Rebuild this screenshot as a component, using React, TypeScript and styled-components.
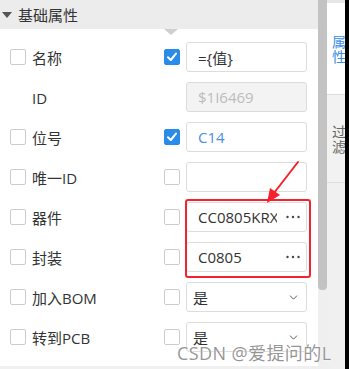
import React from "react";
import styled, { createGlobalStyle } from "styled-components";
import { ChevronDown } from "lucide-react";

const Global = createGlobalStyle`
  html, body { margin: 0; padding: 0; background: #000; }
  body { font-family: "Open Sans", "Noto Sans CJK SC", sans-serif; }
`;

const Screen = styled.div`
  position: relative;
  width: 349px;
  height: 369px;
  display: flex;
  background: #000;
  overflow: hidden;
`;

const Main = styled.div`
  width: 318px;
  height: 369px;
  display: flex;
  flex-direction: column;
  background: #f0f0f0;
`;

const Sheet = styled.div`
  height: 366px;
  background: #fff;
  display: flex;
  flex-direction: column;
`;

const Header = styled.div`
  position: relative;
  height: 29px;
  background: #ececec;
  display: flex;
  align-items: center;
  padding-left: 2px;
  gap: 6px;
  font-family: "Noto Sans CJK SC", sans-serif;
  font-size: 15px;
  color: #333;
  flex-shrink: 0;
`;

const Caret = styled.span`
  width: 0;
  height: 0;
  border-left: 5px solid transparent;
  border-right: 5px solid transparent;
  border-top: 6px solid #555;
  margin-top: 1px;
`;

const Pointer = styled.span`
  position: absolute;
  left: 164px;
  top: 29px;
  width: 0;
  height: 0;
  border-left: 7px solid transparent;
  border-right: 7px solid transparent;
  border-top: 6px solid #cfcfcf;
`;

const List = styled.div`
  padding-top: 8px;
  display: flex;
  flex-direction: column;
`;

const Row = styled.div`
  height: 40px;
  display: flex;
  align-items: center;
  padding-left: 10px;
`;

const Box = styled.span<{ $checked?: boolean; $hidden?: boolean }>`
  width: 16px;
  height: 16px;
  box-sizing: border-box;
  border-radius: 2px;
  flex-shrink: 0;
  visibility: ${(p) => (p.$hidden ? "hidden" : "visible")};
  border: 1px solid ${(p) => (p.$checked ? "#2a8cea" : "#cccccc")};
  background: ${(p) => (p.$checked ? "#2a8cea" : "#fff")};
  display: flex;
  align-items: center;
  justify-content: center;
`;

const Label = styled.span`
  flex: 1;
  margin-left: 6px;
  font-size: 15px;
  color: #333;
  font-family: "Noto Sans CJK SC", sans-serif;
  white-space: nowrap;
`;

const LatinPart = styled.span`
  font-family: "Open Sans", sans-serif;
`;

type Variant = "text" | "disabled" | "more" | "select";

const Field = styled.div<{ $variant: Variant; $tone?: "blue" | "dark" }>`
  width: 121px;
  height: 30px;
  margin-left: 6px;
  margin-right: 11px;
  box-sizing: border-box;
  border: 1px solid #dcdcdc;
  border-radius: 3px;
  display: flex;
  align-items: center;
  padding-left: ${(p) => (p.$variant === "select" ? "6px" : "11px")};
  padding-right: 6px;
  background: ${(p) => (p.$variant === "disabled" ? "#f3f3f3" : "#fff")};
  color: ${(p) =>
    p.$variant === "disabled" ? "#bcbcbc" : p.$tone === "blue" ? "#4a8fe0" : "#333"};
  font-size: 15px;
  font-family: "Open Sans", "Noto Sans CJK SC", sans-serif;
  gap: 9px;
`;

const Value = styled.span`
  flex: 1;
  overflow: hidden;
  white-space: nowrap;
  text-overflow: clip;
`;

const Scroll = styled.div`
  width: 9px;
  height: 369px;
  background: #efefef;
  display: flex;
  flex-direction: column;
`;

const Thumb = styled.div`
  width: 9px;
  height: 290px;
  background: #c3c3c3;
  border-radius: 0 0 4px 4px;
`;

const Side = styled.div`
  width: 18px;
  height: 369px;
  background: #f0f0f0;
  display: flex;
  flex-direction: column;
  overflow: hidden;
`;

const SideTop = styled.div`
  height: 3px;
  background: #e6e6e6;
`;

const Tab = styled.div<{ $active?: boolean; $h: number }>`
  height: ${(p) => p.$h}px;
  box-sizing: border-box;
  border-bottom: 1px solid #dddddd;
  background: ${(p) => (p.$active ? "#fff" : "#f2f2f2")};
  color: ${(p) => (p.$active ? "#3a8ee6" : "#666")};
  display: flex;
  align-items: center;
  padding-left: 5px;
  font-family: "Noto Sans CJK SC", sans-serif;
  font-size: 14px;
  line-height: 15px;
`;

const TabText = styled.span`
  width: 14px;
  word-break: break-all;
  white-space: normal;
`;

const Highlight = styled.div`
  position: absolute;
  left: 185px;
  top: 199px;
  width: 126px;
  height: 79px;
  box-sizing: border-box;
  border: 2px solid #f5222d;
  border-radius: 3px;
  pointer-events: none;
`;

const Arrow = styled.svg`
  position: absolute;
  left: 260px;
  top: 155px;
  pointer-events: none;
`;

const Watermark = styled.div`
  position: absolute;
  left: 177px;
  top: 339px;
  font-size: 18px;
  font-family: "Open Sans", "Noto Sans CJK SC", sans-serif;
  color: rgba(130, 130, 130, 0.85);
  text-shadow: 0 0 1px #fff, 0 0 2px #fff;
  white-space: nowrap;
  letter-spacing: 0.4px;
  pointer-events: none;
`;

const Check = () => (
  <svg width="12" height="12" viewBox="0 0 12 12">
    <path d="M2 6.3 L4.8 9 L10 2.6" fill="none" stroke="#fff" strokeWidth="2" strokeLinecap="round" strokeLinejoin="round" />
  </svg>
);

const MoreDots = () => (
  <svg width="14" height="4" viewBox="0 0 14 4">
    <circle cx="1.5" cy="2" r="1.2" fill="#444" />
    <circle cx="7" cy="2" r="1.2" fill="#444" />
    <circle cx="12.5" cy="2" r="1.2" fill="#444" />
  </svg>
);

type RowData = {
  label: React.ReactNode;
  left?: boolean;
  right?: "checked" | "empty" | "none";
  variant: Variant;
  value: string;
  tone?: "blue" | "dark";
};

const rows: RowData[] = [
  { label: "名称", left: true, right: "checked", variant: "text", value: "={值}" },
  { label: <LatinPart>ID</LatinPart>, left: false, right: "none", variant: "disabled", value: "$1I6469" },
  { label: "位号", left: true, right: "checked", variant: "text", value: "C14", tone: "blue" },
  { label: <>唯一<LatinPart>ID</LatinPart></>, left: true, right: "empty", variant: "text", value: "" },
  { label: "器件", left: true, right: "empty", variant: "more", value: "CC0805KRX7R9BB104" },
  { label: "封装", left: true, right: "empty", variant: "more", value: "C0805" },
  { label: <>加入<LatinPart>BOM</LatinPart></>, left: true, right: "empty", variant: "select", value: "是" },
  { label: <>转到<LatinPart>PCB</LatinPart></>, left: true, right: "empty", variant: "select", value: "是" },
];

export default function App() {
  return (
    <>
      <Global />
      <Screen>
        <Main>
          <Sheet>
            <Header>
              <Caret />
              <span>基础属性</span>
              <Pointer />
            </Header>
            <List>
              {rows.map((r, i) => (
                <Row key={i}>
                  <Box $hidden={!r.left} />
                  <Label>{r.label}</Label>
                  <Box $hidden={r.right === "none"} $checked={r.right === "checked"}>
                    {r.right === "checked" && <Check />}
                  </Box>
                  <Field $variant={r.variant} $tone={r.tone}>
                    <Value>{r.value}</Value>
                    {r.variant === "more" && <MoreDots />}
                    {r.variant === "select" && <ChevronDown size={13} color="#555" strokeWidth={1.8} />}
                  </Field>
                </Row>
              ))}
            </List>
          </Sheet>
        </Main>
        <Scroll>
          <Thumb />
        </Scroll>
        <Side>
          <SideTop />
          <Tab $active $h={92}>
            <TabText>属性</TabText>
          </Tab>
          <Tab $h={88}>
            <TabText>过滤</TabText>
          </Tab>
        </Side>
        <Highlight />
        <Arrow width="50" height="52" viewBox="0 0 50 52">
          <line x1="38" y1="7" x2="14" y2="38" stroke="#f5222d" strokeWidth="2" strokeLinecap="round" />
          <polygon points="7,48 10,33 20,40" fill="#f5222d" />
        </Arrow>
        <Watermark>CSDN @爱提问的L</Watermark>
      </Screen>
    </>
  );
}
